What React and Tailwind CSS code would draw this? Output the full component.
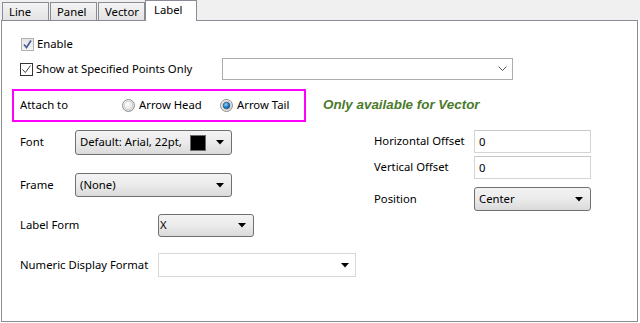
import React from "react";

const Tri = () => (
  <svg width="8" height="5" viewBox="0 0 8 5" className="shrink-0">
    <path d="M0 0 H8 L4 4.5 Z" fill="#000" />
  </svg>
);

const Chevron = () => (
  <svg width="9" height="6" viewBox="0 0 9 6" className="shrink-0">
    <path d="M0.5 0.5 L4.5 4.5 L8.5 0.5" fill="none" stroke="#555" strokeWidth="1" />
  </svg>
);

const Combo = ({ w, h, children }) => (
  <div
    className={`flex items-center justify-between rounded-[3px] border border-[#707070] bg-gradient-to-b from-[#f3f3f3] via-[#ebebeb] to-[#dadada] pl-[4px] pr-[7px] ${w} ${h}`}
  >
    <div className="flex items-center">{children}</div>
    <Tri />
  </div>
);

const Radio = ({ checked }) => (
  <svg width="13" height="13" viewBox="0 0 13 13" className="shrink-0">
    <defs>
      <radialGradient id="rg" cx="0.35" cy="0.35" r="0.8">
        <stop offset="0" stopColor="#ffffff" />
        <stop offset="1" stopColor="#d8d8d8" />
      </radialGradient>
      <radialGradient id="dot" cx="0.4" cy="0.35" r="0.7">
        <stop offset="0" stopColor="#8fd3ff" />
        <stop offset="0.6" stopColor="#1f7fc4" />
        <stop offset="1" stopColor="#0e4f86" />
      </radialGradient>
    </defs>
    <circle cx="6.5" cy="6.5" r="6" fill="url(#rg)" stroke="#8e8f8f" />
    <circle cx="6.5" cy="6.5" r="4.3" fill="none" stroke="#c6c6c6" strokeWidth="0.8" />
    {checked && <circle cx="6.5" cy="6.5" r="3.3" fill="url(#dot)" stroke="#163e6a" strokeWidth="0.6" />}
  </svg>
);

const Tab = ({ w, children }) => (
  <div
    className={`${w} h-[18px] mr-[1px] border border-b-0 border-[#898c95] bg-gradient-to-b from-[#f4f4f4] to-[#e3e3e3] leading-[17px] pl-[6px] text-black`}
  >
    {children}
  </div>
);

export default function App() {
  return (
    <div className="w-[640px] h-[323px] bg-white font-['Noto_Sans',sans-serif] text-[11.3px] text-black overflow-hidden">
      {/* tab strip */}
      <div className="h-[20px] bg-[#f0f0f0] flex items-end pl-[2px] relative z-10">
        <Tab w="w-[47px]">Line</Tab>
        <Tab w="w-[47px]">Panel</Tab>
        <div className="w-[47px] h-[18px] border border-b-0 border-[#898c95] bg-gradient-to-b from-[#f4f4f4] to-[#e3e3e3] leading-[17px] pl-[6px]">
          Vector
        </div>
        <div className="w-[52px] h-[21px] -mb-px border border-b-0 border-[#898c95] bg-white leading-[18px] pl-[8px]">
          Label
        </div>
      </div>

      {/* body */}
      <div className="ml-[1px] w-[637px] h-[302px] border border-[#898c95] bg-white pl-[18px]">
        {/* Enable */}
        <div className="mt-[15px] h-[16px] flex items-center">
          <div className="ml-[1px] w-[13px] h-[13px] border border-[#b1b1b1] bg-gradient-to-b from-[#e6e6e6] to-[#f4f4f4] flex items-center justify-center">
            <svg width="11" height="11" viewBox="0 0 11 11">
              <path d="M2 5.5 L4.5 8.5 L9 1.5" fill="none" stroke="#4a5f9a" strokeWidth="1.7" />
            </svg>
          </div>
          <span className="ml-[3px]">Enable</span>
        </div>

        {/* Show at specified */}
        <div className="mt-[6px] h-[22px] flex items-center">
          <div className="w-[202px] flex items-center">
            <div className="w-[13px] h-[13px] border border-[#333333] bg-white flex items-center justify-center">
              <svg width="11" height="11" viewBox="0 0 11 11">
                <path d="M1.5 5.5 L4.3 8.5 L9.5 1.5" fill="none" stroke="#444" strokeWidth="1" />
              </svg>
            </div>
            <span className="ml-[3px]">Show at Specified Points Only</span>
          </div>
          <div className="w-[291px] h-[22px] border border-[#acacac] bg-white flex items-center justify-end pr-[5px]">
            <Chevron />
          </div>
        </div>

        {/* Attach to */}
        <div className="mt-[9px] flex items-center -ml-[8px]">
          <div className="w-[294px] h-[33px] border-2 border-[#ff00ff] flex items-center pl-[6px]">
            <span className="w-[102px]">Attach to</span>
            <div className="w-[98px] flex items-center">
              <Radio />
              <span className="ml-[4px]">Arrow Head</span>
            </div>
            <div className="flex items-center">
              <Radio checked />
              <span className="ml-[4px]">Arrow Tail</span>
            </div>
          </div>
          <span className="ml-[17px] -mt-[1px] font-['Liberation_Sans',sans-serif] font-bold italic text-[13.4px] text-[#4a7a2a]">
            Only available for Vector
          </span>
        </div>

        {/* two columns */}
        <div className="mt-[8px] flex">
          <div className="w-[354px]">
            <div className="h-[25px] flex items-center">
              <span className="w-[55px]">Font</span>
              <Combo w="w-[157px]" h="h-[25px]">
                <span>Default: Arial, 22pt,</span>
                <span className="ml-[8px] w-[16px] h-[16px] bg-black border border-[#6a6a6a]" />
              </Combo>
            </div>
            <div className="mt-[18px] h-[24px] flex items-center">
              <span className="w-[55px]">Frame</span>
              <Combo w="w-[157px]" h="h-[24px]">
                <span>(None)</span>
              </Combo>
            </div>
            <div className="mt-[17px] h-[23px] flex items-center">
              <span className="w-[138px]">Label Form</span>
              <Combo w="w-[96px]" h="h-[23px]">
                <span className="-ml-[3px]">X</span>
              </Combo>
            </div>
            <div className="mt-[16px] h-[24px] flex items-center">
              <span className="w-[138px]">Numeric Display Format</span>
              <div className="w-[198px] h-[24px] border border-[#d9d9d9] bg-white flex items-center justify-end pr-[6px]">
                <Tri />
              </div>
            </div>
          </div>

          <div>
            <div className="h-[23px] flex items-center">
              <span className="w-[100px]">Horizontal Offset</span>
              <div className="w-[117px] h-[23px] border border-[#d4d4d4] border-t-[#c8c8c8] bg-white pl-[4px] leading-[21px]">0</div>
            </div>
            <div className="mt-[3px] h-[23px] flex items-center">
              <span className="w-[100px]">Vertical Offset</span>
              <div className="w-[117px] h-[23px] border border-[#d4d4d4] border-t-[#c8c8c8] bg-white pl-[4px] leading-[21px]">0</div>
            </div>
            <div className="mt-[8px] h-[24px] flex items-center">
              <span className="w-[100px]">Position</span>
              <Combo w="w-[117px]" h="h-[24px]">
                <span>Center</span>
              </Combo>
            </div>
          </div>
        </div>
      </div>
    </div>
  );
}
